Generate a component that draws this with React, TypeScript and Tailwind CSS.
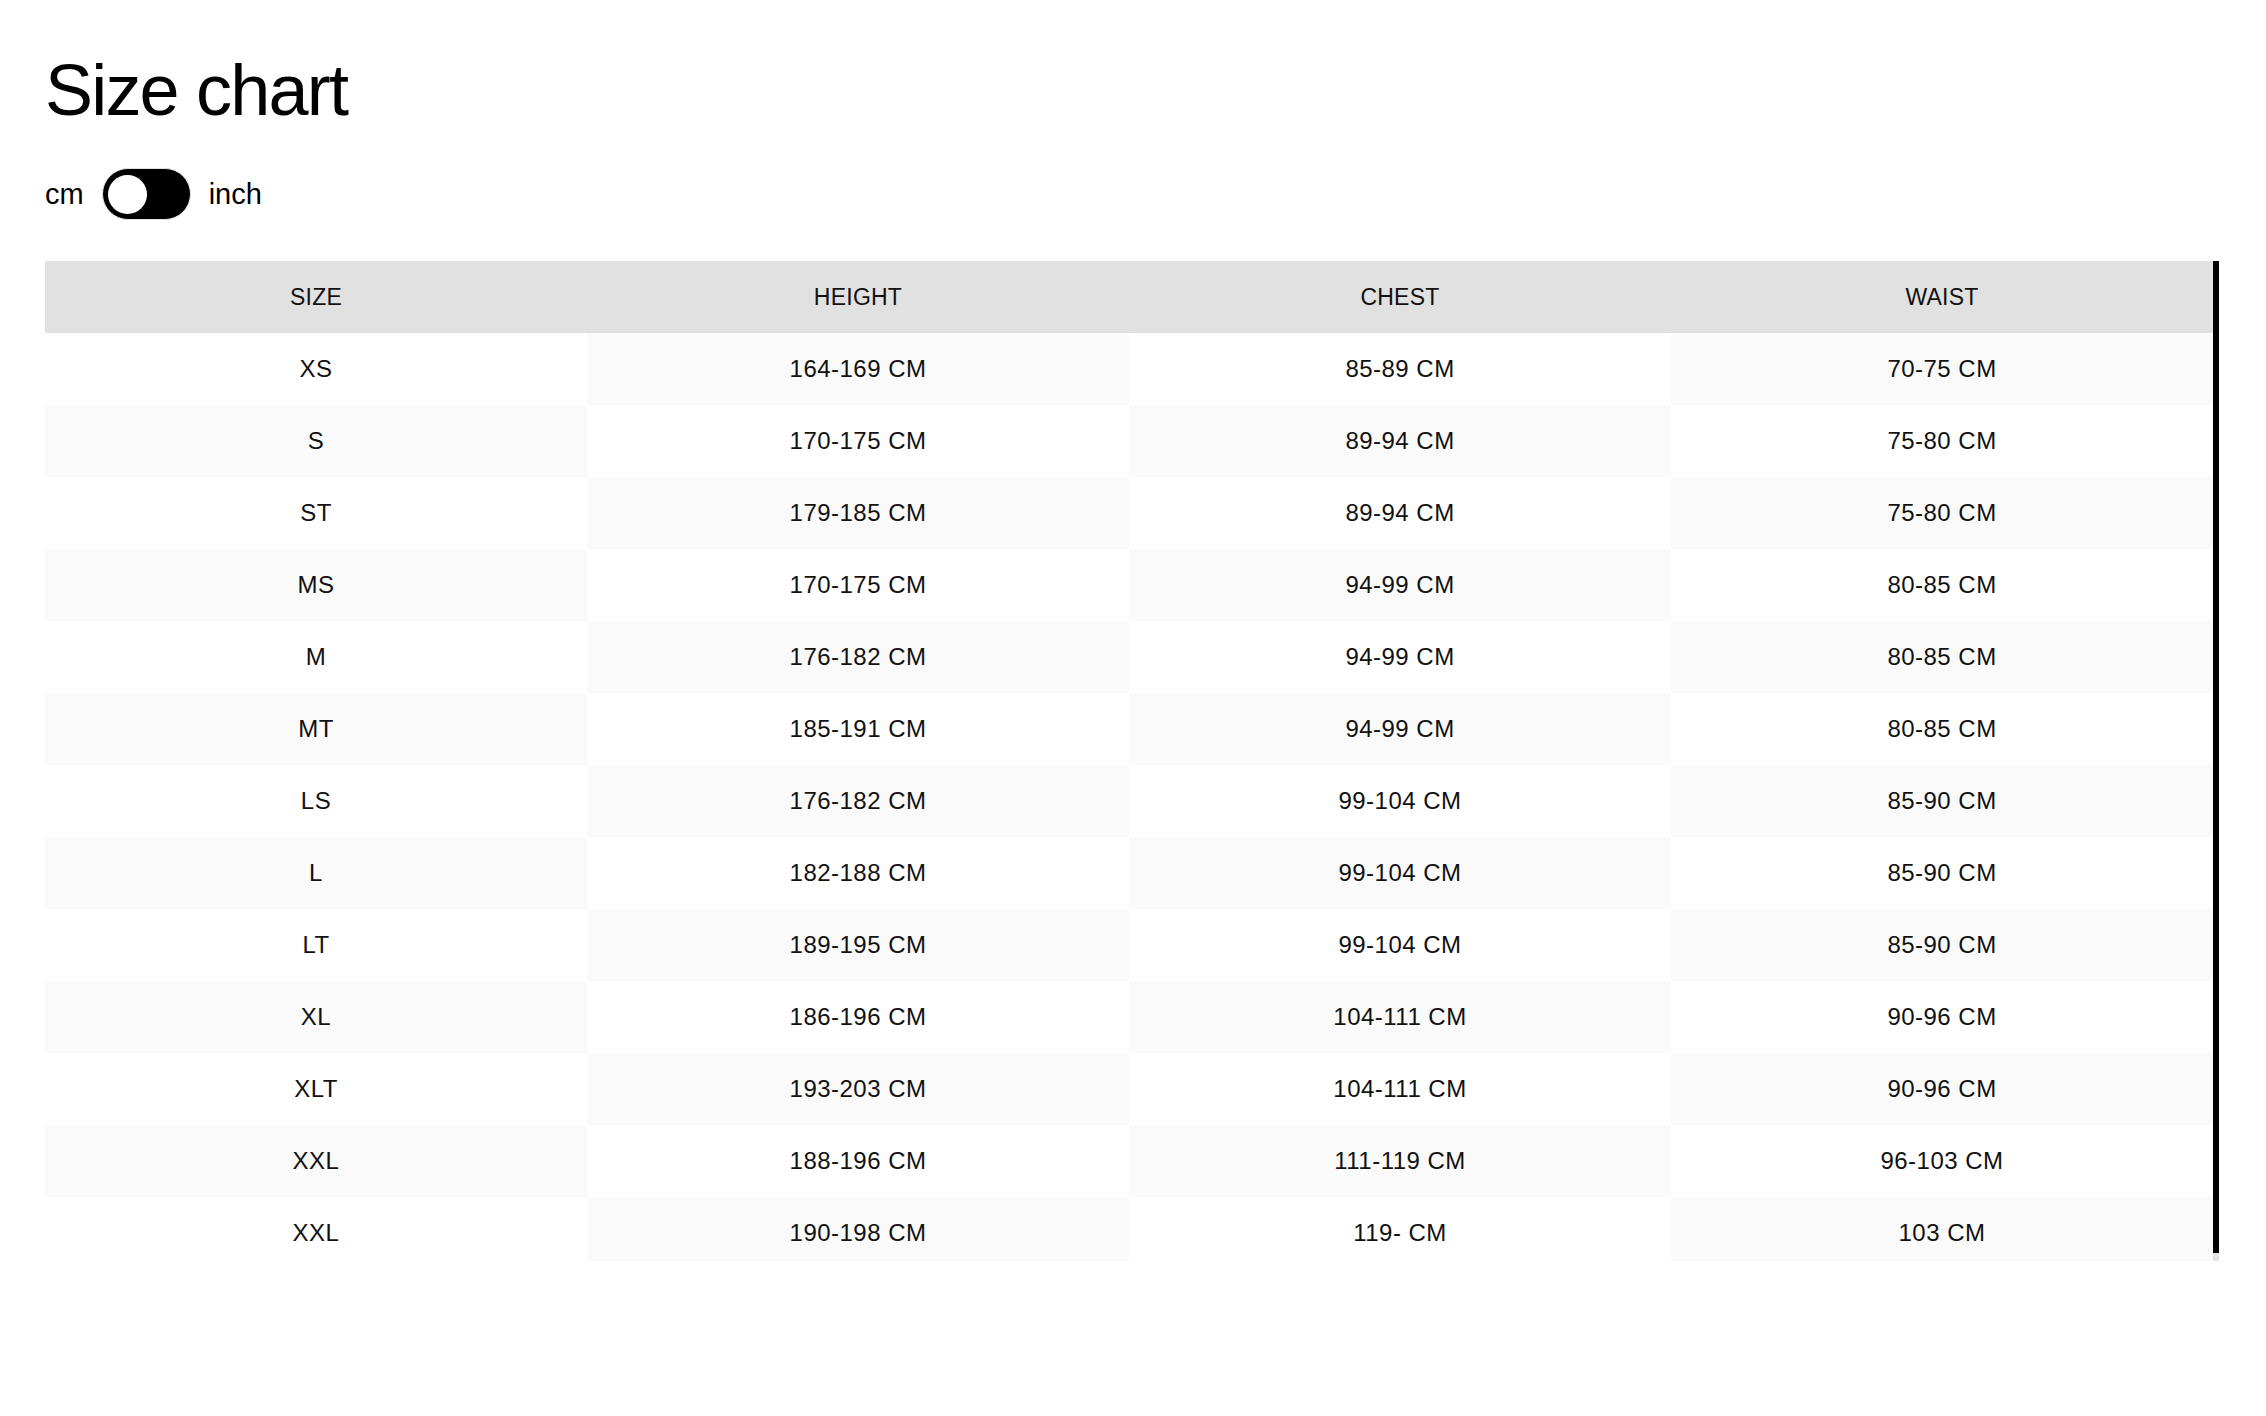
import React from "react";

const rows: [string, string, string, string][] = [
  ["XS", "164-169 CM", "85-89 CM", "70-75 CM"],
  ["S", "170-175 CM", "89-94 CM", "75-80 CM"],
  ["ST", "179-185 CM", "89-94 CM", "75-80 CM"],
  ["MS", "170-175 CM", "94-99 CM", "80-85 CM"],
  ["M", "176-182 CM", "94-99 CM", "80-85 CM"],
  ["MT", "185-191 CM", "94-99 CM", "80-85 CM"],
  ["LS", "176-182 CM", "99-104 CM", "85-90 CM"],
  ["L", "182-188 CM", "99-104 CM", "85-90 CM"],
  ["LT", "189-195 CM", "99-104 CM", "85-90 CM"],
  ["XL", "186-196 CM", "104-111 CM", "90-96 CM"],
  ["XLT", "193-203 CM", "104-111 CM", "90-96 CM"],
  ["XXL", "188-196 CM", "111-119 CM", "96-103 CM"],
  ["XXL", "190-198 CM", "119- CM", "103 CM"],
];

const headers = ["SIZE", "HEIGHT", "CHEST", "WAIST"];

export default function App() {
  return (
    <div className="min-h-screen bg-white pl-[45px] pr-[47px] pt-[54px] font-['Liberation_Sans',Arial,sans-serif] text-black">
      <h1 className="text-[72px] leading-none font-normal tracking-[-0.025em]">Size chart</h1>
      <div className="mt-[42px] flex items-center gap-[18px]">
        <span className="text-[29px] leading-none">cm</span>
        <div className="relative h-[52px] w-[89px] rounded-full border border-[#e2e2e2] bg-black">
          <div className="absolute left-[5px] top-[6px] h-[39px] w-[39px] rounded-full bg-white" />
        </div>
        <span className="text-[29px] leading-none">inch</span>
      </div>
      <div className="mt-[41px] flex h-[1000px]">
        <div className="min-w-0 flex-1 overflow-hidden">
          <table className="w-full table-fixed border-collapse">
            <thead>
              <tr className="bg-[#e1e1e1]">
                {headers.map((h) => (
                  <th
                    key={h}
                    className="h-[72px] p-0 text-center align-middle text-[23px] font-normal tracking-[0.01em] text-[#111]"
                  >
                    {h}
                  </th>
                ))}
              </tr>
            </thead>
            <tbody>
              {rows.map((r, ri) => (
                <tr key={ri}>
                  {r.map((c, ci) => (
                    <td
                      key={ci}
                      className={
                        (ri + ci) % 2 === 1
                          ? "h-[72px] p-0 text-center align-middle text-[24px] tracking-[0.02em] text-[#111] bg-[#fafafa]"
                          : "h-[72px] p-0 text-center align-middle text-[24px] tracking-[0.02em] text-[#111] bg-white"
                      }
                    >
                      {c}
                    </td>
                  ))}
                </tr>
              ))}
            </tbody>
          </table>
        </div>
        <div className="flex w-[6px] flex-col bg-[#e1e1e1]">
          <div className="h-[992px] w-full bg-black" />
        </div>
      </div>
    </div>
  );
}
